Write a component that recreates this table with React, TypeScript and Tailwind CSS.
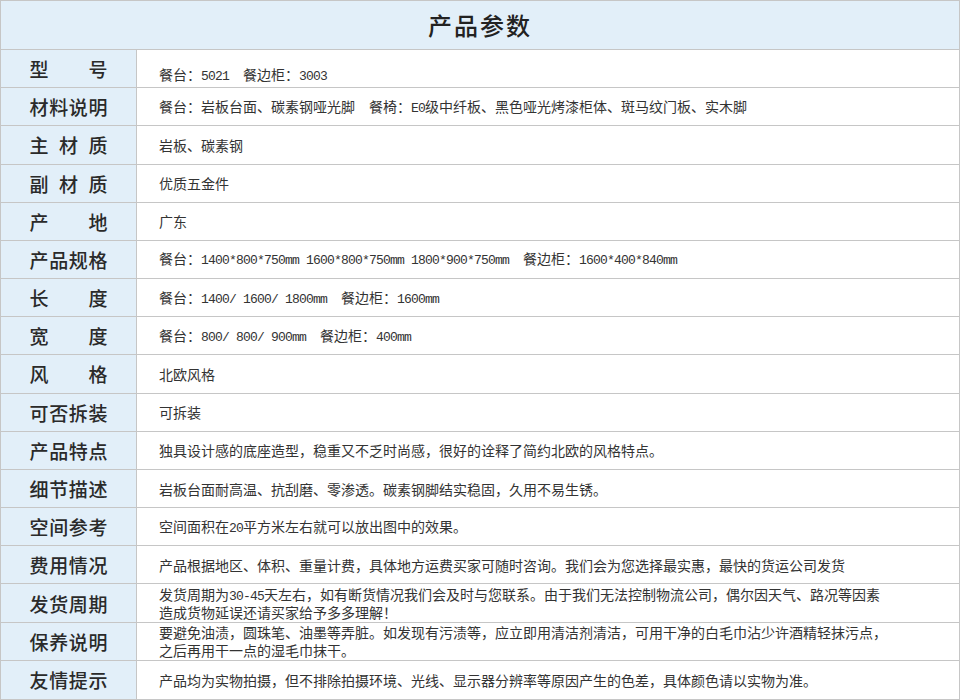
import React from 'react';

type Row = { label: string; lines: string[]; top?: boolean };

const rows: Row[] = [
  { label: '型号', lines: ['餐台：5021　餐边柜：3003'], top: true },
  { label: '材料说明', lines: ['餐台：岩板台面、碳素钢哑光脚　餐椅：E0级中纤板、黑色哑光烤漆柜体、斑马纹门板、实木脚'] },
  { label: '主材质', lines: ['岩板、碳素钢'] },
  { label: '副材质', lines: ['优质五金件'] },
  { label: '产地', lines: ['广东'] },
  { label: '产品规格', lines: ['餐台：1400*800*750mm 1600*800*750mm 1800*900*750mm　餐边柜：1600*400*840mm'] },
  { label: '长度', lines: ['餐台：1400/ 1600/ 1800mm　餐边柜：1600mm'] },
  { label: '宽度', lines: ['餐台：800/ 800/ 900mm　餐边柜：400mm'] },
  { label: '风格', lines: ['北欧风格'] },
  { label: '可否拆装', lines: ['可拆装'] },
  { label: '产品特点', lines: ['独具设计感的底座造型，稳重又不乏时尚感，很好的诠释了简约北欧的风格特点。'] },
  { label: '细节描述', lines: ['岩板台面耐高温、抗刮磨、零渗透。碳素钢脚结实稳固，久用不易生锈。'] },
  { label: '空间参考', lines: ['空间面积在20平方米左右就可以放出图中的效果。'] },
  { label: '费用情况', lines: ['产品根据地区、体积、重量计费，具体地方运费买家可随时咨询。我们会为您选择最实惠，最快的货运公司发货'] },
  {
    label: '发货周期',
    lines: [
      '发货周期为30-45天左右，如有断货情况我们会及时与您联系。由于我们无法控制物流公司，偶尔因天气、路况等因素',
      '造成货物延误还请买家给予多多理解！',
    ],
  },
  {
    label: '保养说明',
    lines: [
      '要避免油渍，圆珠笔、油墨等弄脏。如发现有污渍等，应立即用清洁剂清洁，可用干净的白毛巾沾少许酒精轻抹污点，',
      '之后再用干一点的湿毛巾抹干。',
    ],
  },
  { label: '友情提示', lines: ['产品均为实物拍摄，但不排除拍摄环境、光线、显示器分辨率等原因产生的色差，具体颜色请以实物为准。'] },
];

// latin runs are set narrow, like the old bitmap song font
function Line({ text, multi }: { text: string; multi: boolean }) {
  const parts = text.split(/([\x20-\x7e]+)/);
  return (
    <span className={multi ? 'block h-[18px] leading-[18px]' : 'block leading-none'}>
      {parts.map((p, k) =>
        /^[\x20-\x7e]+$/.test(p) ? (
          <span
            key={k}
            className="font-['Liberation_Mono',monospace] text-[13px] tracking-[-0.8px] leading-none whitespace-pre"
          >
            {p}
          </span>
        ) : (
          <span key={k}>{p}</span>
        )
      )}
    </span>
  );
}

export default function App() {
  return (
    <div className="w-[960px] h-[700px] grid grid-rows-[49px_repeat(17,minmax(0,1fr))] border border-[#c6c6c6] bg-white font-['Noto_Sans_CJK_SC',sans-serif] text-[#333]">
      <div className="flex items-center justify-center bg-[#e2eff9] border-b border-[#c6c6c6]">
        <h1 className="text-[24px] font-medium tracking-[2px] text-[#222]">产品参数</h1>
      </div>

      {rows.map((row, i) => (
        <div
          key={row.label}
          className={
            'min-h-0 grid grid-cols-[136px_1fr] ' +
            (i < rows.length - 1 ? 'border-b border-[#c6c6c6]' : '')
          }
        >
          <div className="flex items-center justify-center bg-[#e2eff9] border-r border-[#c6c6c6]">
            <div className="w-[78px] flex justify-between text-[19px] font-medium leading-none text-[#2a2a2a]">
              {row.label.split('').map((ch, j) => (
                <span key={j}>{ch}</span>
              ))}
            </div>
          </div>
          <div
            className={
              'min-h-0 flex flex-col justify-center pl-[22px] text-[14px] whitespace-nowrap' +
              (row.top ? ' pt-3' : '')
            }
          >
            {row.lines.map((line, j) => (
              <Line key={j} text={line} multi={row.lines.length > 1} />
            ))}
          </div>
        </div>
      ))}
    </div>
  );
}
